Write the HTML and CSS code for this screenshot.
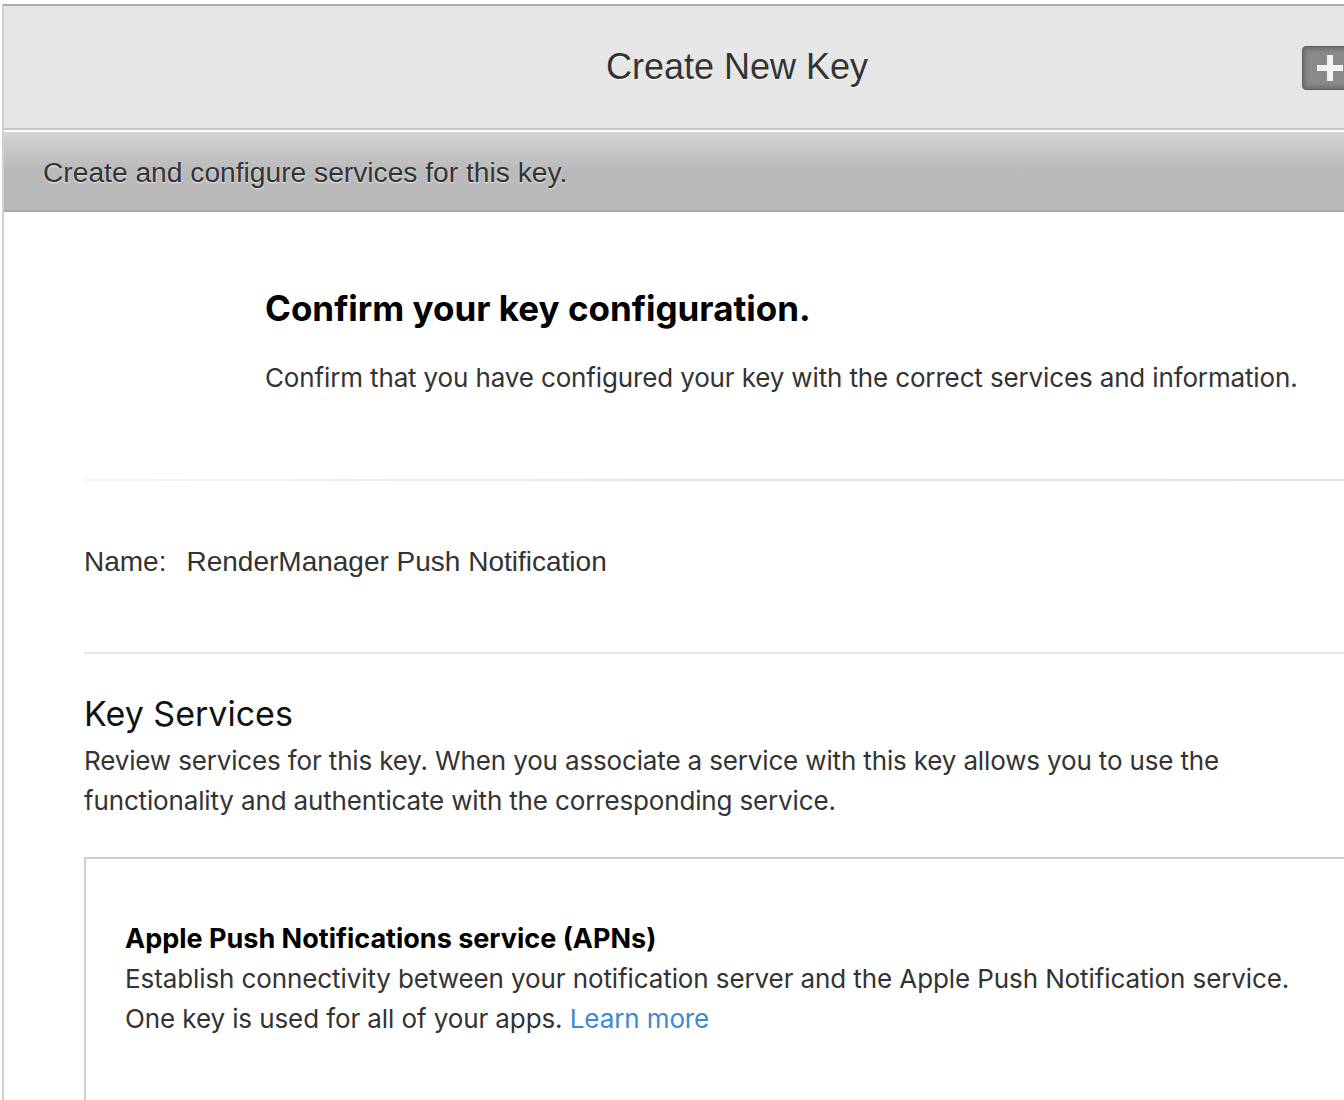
FILE: index.html
```html
<!DOCTYPE html>
<html lang="en">
<head>
<meta charset="utf-8">
<title>Create New Key</title>
<link rel="stylesheet" href="styles.css">
</head>
<body>
<div class="page">
  <header class="header">
    <h1 class="header-title">Create New Key</h1>
    <button class="add-btn" type="button" aria-label="Add">
      <svg width="26" height="26" viewBox="0 0 26 26" aria-hidden="true">
        <rect x="10" y="0" width="6" height="26" fill="#f2f2f2"/>
        <rect x="0" y="10" width="26" height="6" fill="#f2f2f2"/>
      </svg>
    </button>
  </header>
  <div class="subbar">
    <p class="subbar-text">Create and configure services for this key.</p>
  </div>
  <main class="content">
    <section class="intro">
      <h2 class="intro-title">Confirm your key configuration.</h2>
      <p class="intro-text">Confirm that you have configured your key with the correct services and information.</p>
    </section>
    <hr class="divider-fade">
    <div class="name-row">
      <span class="name-label">Name:</span>
      <span class="name-value">RenderManager Push Notification</span>
    </div>
    <hr class="divider">
    <section class="services">
      <h3 class="services-title">Key Services</h3>
      <p class="services-text">Review services for this key. When you associate a service with this key allows you to use the functionality and authenticate with the corresponding service.</p>
      <div class="service-box">
        <h4 class="service-title">Apple Push Notifications service (APNs)</h4>
        <p class="service-text">Establish connectivity between your notification server and the Apple Push Notification service.<br>One key is used for all of your apps. <a class="link" href="#">Learn more</a></p>
      </div>
    </section>
  </main>
</div>
</body>
</html>
```
FILE: styles.css
```css
html, body {
  margin: 0;
  padding: 0;
  overflow: hidden;
  background: #fff;
}

body {
  font-family: "Liberation Sans", Arial, sans-serif;
  color: #333;
}

.page {
  margin: 4px 0 0 2px;
  width: 1466px;
  border-top: 2px solid #acacac;
  border-left: 2px solid #d0d0d0;
  min-height: 1200px;
  overflow: hidden;
}

.header {
  position: relative;
  height: 122px;
  background: #e6e6e6;
  display: flex;
  align-items: center;
  justify-content: center;
}

.header-title {
  margin: 0;
  font-size: 36px;
  font-weight: normal;
  color: #333;
  text-shadow: 0 1px 1px #fff;
}

.add-btn {
  position: absolute;
  left: 1298px;
  top: 40px;
  width: 56px;
  height: 44px;
  padding: 0;
  border: 1px solid #5e5e5e;
  border-radius: 4px;
  background: #8a8a8a;
  box-shadow: inset 0 0 4px 2px #6a6a6a;
  display: flex;
  align-items: center;
  justify-content: center;
}

.subbar {
  border-top: 2px solid #c6c6c6;
  border-bottom: 2px solid #a9a9a9;
  height: 78px;
  padding: 2px 0 0 39px;
  box-sizing: content-box;
  background: linear-gradient(to bottom, #fff 0, #fff 2px, #d3d3d3 2px, #c4c4c4 24px, #bababa 40px, #b9b9b9 100%);
  display: flex;
  align-items: center;
}

.subbar-text {
  margin: 3px 0 0;
  font-size: 28.2px;
  color: #333;
  text-shadow: 0 1px 2px #e8e8e8;
}

.content {
  padding: 76px 0 0 80px;
}

.intro {
  padding-left: 181px;
}

.intro-title {
  margin: 0;
  font-family: Inter, "Liberation Sans", sans-serif;
  font-size: 35px;
  line-height: 40px;
  font-weight: 700;
  color: #000;
}

.intro-text {
  margin: 30px 0 0;
  font-family: Inter, "Liberation Sans", sans-serif;
  font-size: 26px;
  line-height: 40px;
  letter-spacing: -0.14px;
  color: #333;
}

.divider-fade {
  margin: 81px 0 0;
  height: 2px;
  border: 0;
  background: linear-gradient(to right, #f4f5f5 0, #e6e7e7 40%, #e2e3e3 100%);
}

.name-row {
  margin-top: 61px;
  display: flex;
  gap: 20px;
  font-size: 28px;
  line-height: 40px;
  color: #333;
}

.divider {
  margin: 70px 0 0;
  height: 2px;
  border: 0;
  background: #e6e6e6;
}

.services-title {
  margin: 38px 0 0;
  font-family: Inter, "Liberation Sans", sans-serif;
  font-size: 34px;
  line-height: 44px;
  font-weight: 400;
  color: #111;
}

.services-text {
  margin: 5px 0 0;
  max-width: 1180px;
  font-family: Inter, "Liberation Sans", sans-serif;
  font-size: 26px;
  line-height: 40px;
  letter-spacing: -0.15px;
  color: #333;
}

.service-box {
  margin-top: 36px;
  border: 2px solid #d0d0d0;
  padding: 60px 0 120px 39px;
}

.service-title {
  margin: 0;
  font-family: Inter, "Liberation Sans", sans-serif;
  font-size: 27px;
  line-height: 40px;
  font-weight: 700;
  color: #000;
}

.service-text {
  margin: 0;
  font-family: Inter, "Liberation Sans", sans-serif;
  font-size: 26px;
  line-height: 40px;
  letter-spacing: -0.1px;
  color: #333;
}

.link {
  color: #3b89d2;
  text-decoration: none;
}
```
